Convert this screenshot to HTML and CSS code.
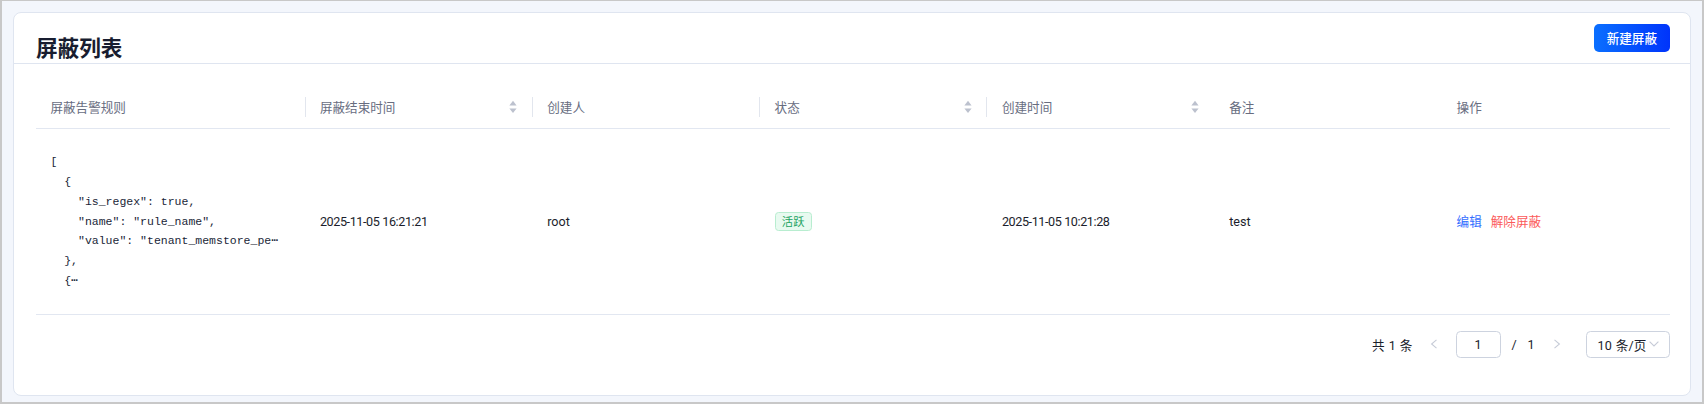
FILE: index.html
```html
<!DOCTYPE html>
<html lang="zh-CN">
<head>
<meta charset="utf-8">
<title>屏蔽列表</title>
<link rel="stylesheet" href="styles.css">
</head>
<body>
<div class="card">
  <div class="card-head">
    <h1 class="title">屏蔽列表</h1>
    <button class="btn-primary" type="button">新建屏蔽</button>
  </div>
  <div class="card-body">
    <table class="table">
      <colgroup>
        <col class="c-rule">
        <col><col><col><col><col><col>
      </colgroup>
      <thead>
        <tr>
          <th class="sep">屏蔽告警规则</th>
          <th class="sep"><div class="th-in"><span>屏蔽结束时间</span><svg class="sorter" viewBox="0 0 8 14" width="8" height="14"><path d="M0.4 5.4 L4 0.8 L7.6 5.4 Z" fill="#bcc1ce"/><path d="M0.4 8.4 L4 13 L7.6 8.4 Z" fill="#bcc1ce"/></svg></div></th>
          <th class="sep">创建人</th>
          <th class="sep"><div class="th-in"><span>状态</span><svg class="sorter" viewBox="0 0 8 14" width="8" height="14"><path d="M0.4 5.4 L4 0.8 L7.6 5.4 Z" fill="#bcc1ce"/><path d="M0.4 8.4 L4 13 L7.6 8.4 Z" fill="#bcc1ce"/></svg></div></th>
          <th><div class="th-in"><span>创建时间</span><svg class="sorter" viewBox="0 0 8 14" width="8" height="14"><path d="M0.4 5.4 L4 0.8 L7.6 5.4 Z" fill="#bcc1ce"/><path d="M0.4 8.4 L4 13 L7.6 8.4 Z" fill="#bcc1ce"/></svg></div></th>
          <th>备注</th>
          <th>操作</th>
        </tr>
      </thead>
      <tbody>
        <tr>
          <td><pre class="code">[
  {
    "is_regex": true,
    "name": "rule_name",
    "value": "tenant_memstore_pe⋯
  },
  {⋯</pre></td>
          <td><span class="time">2025-11-05 16:21:21</span></td>
          <td>root</td>
          <td><span class="tag">活跃</span></td>
          <td><span class="time">2025-11-05 10:21:28</span></td>
          <td>test</td>
          <td><div class="actions"><a class="link">编辑</a><a class="link danger">解除屏蔽</a></div></td>
        </tr>
      </tbody>
    </table>
    <div class="pager">
      <span class="total">共 1 条</span>
      <span class="arrow"><svg viewBox="0 0 8 10" width="8" height="10"><path d="M6.5 0.8 L1.6 5 L6.5 9.2" fill="none" stroke="#c6cbd7" stroke-width="1.1"/></svg></span>
      <span class="page-input">1</span>
      <span class="slash">/</span>
      <span class="page-total">1</span>
      <span class="arrow next"><svg viewBox="0 0 8 10" width="8" height="10"><path d="M1.5 0.8 L6.4 5 L1.5 9.2" fill="none" stroke="#c6cbd7" stroke-width="1.1"/></svg></span>
      <span class="size-select"><span class="size-text">10 条/页</span><svg viewBox="0 0 10 6" width="10" height="6"><path d="M0.6 0.6 L5 5 L9.4 0.6" fill="none" stroke="#c6cbd7" stroke-width="1.1"/></svg></span>
    </div>
  </div>
</div>
</body>
</html>
```
FILE: styles.css
```css
html, body {
  margin: 0;
  padding: 0;
}
body {
  box-sizing: border-box;
  width: 1704px;
  height: 404px;
  border-style: solid;
  border-color: #c8c8c8;
  border-width: 1px 2px 2px 2px;
  background: #f3f6fc;
  padding: 11px 11px 0 11px;
  font-family: Roboto, "Noto Sans CJK SC", sans-serif;
  font-size: 12.6px;
  color: #1b1e2c;
  overflow: hidden;
}
.card {
  background: #fff;
  border: 1px solid #dfe5f0;
  border-radius: 8px;
}
.card-head {
  box-sizing: border-box;
  height: 51px;
  display: flex;
  justify-content: space-between;
  align-items: flex-start;
  padding: 11px 20.5px 0 22px;
  border-bottom: 1px solid #dfe5f0;
}
.title {
  margin: 7.5px 0 0 0;
  font-size: 21.6px;
  line-height: 30px;
  font-weight: 700;
  color: #181d30;
  font-family: "Noto Sans CJK SC", sans-serif;
}
.btn-primary {
  height: 28px;
  padding: 0 12.5px;
  border: 0;
  border-radius: 5px;
  background: linear-gradient(90deg, #0a6fff 0%, #0034fb 100%);
  color: #fff;
  font-family: "Noto Sans CJK SC", sans-serif;
  font-size: 12.6px;
  font-weight: 500;
  line-height: 28px;
}
.card-body {
  padding: 23px 20.5px 37px 22px;
}
.table {
  width: 100%;
  border-collapse: collapse;
  table-layout: fixed;
}
.c-rule {
  width: 269.5px;
}
.table th {
  position: relative;
  text-align: left;
  font-weight: 400;
  color: #686d7f;
  padding: 10.6px 14.4px;
  line-height: 19.8px;
  border-bottom: 1px solid #e2e7f1;
}
.table th.sep::before {
  content: "";
  position: absolute;
  right: 0;
  top: 50%;
  width: 1px;
  height: 20px;
  margin-top: -10px;
  background: #e2e6ee;
}
.th-in {
  display: flex;
  justify-content: space-between;
  align-items: center;
}
.sorter {
  display: block;
  margin-right: 1px;
}
.table td {
  padding: 14.4px;
  line-height: 19.8px;
  vertical-align: middle;
  border-bottom: 1px solid #e2e7f1;
  color: #1b1e2c;
}
.code {
  margin: 0;
  padding: 8.8px 0;
  font-family: "Liberation Mono", "DejaVu Sans Mono", monospace;
  font-size: 11.5px;
  line-height: 19.8px;
  color: #1a1f38;
  white-space: pre;
}
.time {
  letter-spacing: -0.4px;
}
.tag {
  display: inline-block;
  font-family: "Noto Sans CJK SC", sans-serif;
  font-size: 11.3px;
  line-height: 17.4px;
  padding: 0 6.3px;
  border: 1px solid #b8edd0;
  background: #e8faf0;
  color: #1ba260;
  border-radius: 3.5px;
}
.actions {
  display: flex;
  gap: 9px;
}
.link {
  color: #3470ff;
  cursor: pointer;
}
.link.danger {
  color: #fb5b5b;
}
.pager {
  margin-top: 16px;
  height: 27px;
  display: flex;
  justify-content: flex-end;
  align-items: center;
  color: #1b1e2c;
}
.total {
  margin-right: 7.2px;
  word-spacing: 1px;
}
.arrow {
  width: 28.8px;
  height: 27px;
  display: flex;
  align-items: center;
  justify-content: center;
}
.arrow svg {
  display: block;
}
.page-input {
  box-sizing: border-box;
  width: 45px;
  height: 27px;
  margin-left: 7.2px;
  border: 1px solid #cdd3df;
  border-radius: 4.5px;
  display: flex;
  align-items: center;
  justify-content: center;
}
.slash {
  margin: 0 10.8px;
}
.next {
  margin-left: 7.8px;
}
.size-select {
  box-sizing: border-box;
  width: 83.5px;
  height: 27px;
  margin-left: 14.9px;
  padding: 0 9.5px 0 10.6px;
  border: 1px solid #cdd3df;
  border-radius: 4.5px;
  display: flex;
  align-items: center;
  justify-content: space-between;
}
.size-text {
  word-spacing: 1px;
}
.size-select svg {
  display: block;
}
```
